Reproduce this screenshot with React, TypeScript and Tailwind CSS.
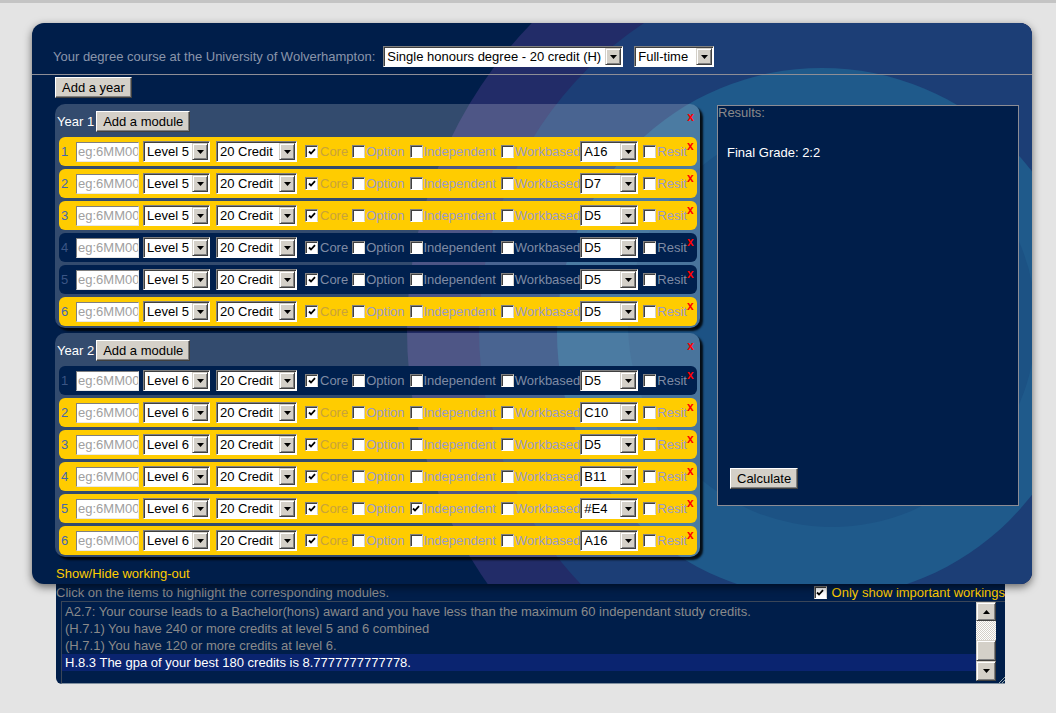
import { ReactNode } from 'react'

const Btn = ({ children, className = '' }: { children: ReactNode; className?: string }) => (
  <button
    className={`h-[21px] px-[6px] bg-[#d4d0c8] text-black text-[13px] leading-none border border-t-white border-l-white border-b-[#404040] border-r-[#404040] shadow-[inset_-1px_-1px_0_#808080] ${className}`}
  >
    {children}
  </button>
)

const Arrow = () => (
  <span className="w-[16px] h-[17px] bg-[#d4d0c8] border border-t-[#d4d0c8] border-l-[#d4d0c8] border-b-[#404040] border-r-[#404040] shadow-[inset_1px_1px_0_#fff,inset_-1px_-1px_0_#808080] flex items-center justify-center">
    <svg width="7" height="4" viewBox="0 0 7 4">
      <polygon points="0,0 7,0 3.5,4" fill="#000" />
    </svg>
  </span>
)

const Sel = ({ value, w }: { value: string; w: string }) => (
  <div
    className={`flex items-center h-[21px] bg-white border border-t-[#808080] border-l-[#808080] border-b-white border-r-white shadow-[inset_1px_1px_0_#404040] pr-[1px] ${w}`}
  >
    <span className="flex-1 pl-[3px] text-[13px] leading-[17px] text-black overflow-hidden whitespace-nowrap">{value}</span>
    <Arrow />
  </div>
)

const Cb = ({ checked = false, className = '' }: { checked?: boolean; className?: string }) => (
  <span
    className={`shrink-0 w-[13px] h-[13px] bg-white border border-t-[#808080] border-l-[#808080] border-b-white border-r-[#d4d0c8] shadow-[inset_1px_1px_0_#404040] flex items-center justify-center ${className}`}
  >
    {checked && (
      <svg width="8" height="8" viewBox="0 0 8 8">
        <path d="M1 3.5 L3 5.5 L7 1.2" stroke="#000" strokeWidth="1.8" fill="none" />
      </svg>
    )}
  </span>
)

type RowData = { grade: string; yellow: boolean; indep?: boolean }

const Row = ({ n, level, r }: { n: number; level: string; r: RowData }) => {
  const label = r.yellow ? 'text-[#9a9acb]' : 'text-[#7f8ba4]'
  const core = r.yellow ? 'text-[#c9a33a]' : 'text-[#7f8ba4]'
  return (
    <div
      className={`h-[29px] rounded-[6px] flex items-center text-[13px] ${r.yellow ? 'bg-[#ffcc00]' : 'bg-[#00204e]'}`}
    >
      <span className={`ml-[2px] w-[15px] ${r.yellow ? 'text-[#4466b0]' : 'text-[#3b5585]'}`}>{n}</span>
      <div className="w-[63px] h-[20px] bg-white border border-t-[#808080] border-l-[#808080] border-b-[#e8e8e8] border-r-[#e8e8e8] text-[#a0a0a0] pl-[1px] leading-[18px] overflow-hidden whitespace-nowrap">
        eg:6MM00
      </div>
      <Sel value={level} w="w-[67px] ml-[4px]" />
      <Sel value="20 Credit" w="w-[81px] ml-[6px]" />
      <Cb checked className="ml-[8px]" />
      <span className={`ml-[2px] ${core}`}>Core</span>
      <Cb className="ml-[4px]" />
      <span className={`ml-[1px] ${label}`}>Option</span>
      <Cb checked={r.indep} className="ml-[5px]" />
      <span className={`ml-[1px] ${label}`}>Independent</span>
      <Cb className="ml-[5px]" />
      <span className={`ml-[1px] ${label}`}>Workbased</span>
      <Sel value={r.grade} w="w-[58px]" />
      <Cb className="ml-[5px]" />
      <span className={`ml-[1px] ${label}`}>Resit</span>
      <span className="self-start mt-[3px] text-[12px] leading-[12px] font-bold text-[#ff0000]">x</span>
    </div>
  )
}

const Year = ({ year, level, rows }: { year: number; level: string; rows: RowData[] }) => (
  <div className="relative bg-white/20 rounded-[10px] shadow-[3px_3px_2px_rgba(0,0,0,0.85)] pl-[4px] pr-[3px] pt-[7px] pb-[2px]">
    <div className="flex items-center h-[21px] -ml-[2px]">
      <span className="text-white text-[13px] mr-[2px]">Year {year}</span>
      <Btn>Add a module</Btn>
    </div>
    <span className="absolute top-[7px] right-[6px] text-[12px] leading-[12px] font-bold text-[#ff0000]">x</span>
    <div className="mt-[5px] flex flex-col gap-[3px]">
      {rows.map((r, i) => (
        <Row key={i} n={i + 1} level={level} r={r} />
      ))}
    </div>
  </div>
)

const year1: RowData[] = [
  { grade: 'A16', yellow: true },
  { grade: 'D7', yellow: true },
  { grade: 'D5', yellow: true },
  { grade: 'D5', yellow: false },
  { grade: 'D5', yellow: false },
  { grade: 'D5', yellow: true },
]

const year2: RowData[] = [
  { grade: 'D5', yellow: false },
  { grade: 'C10', yellow: true },
  { grade: 'D5', yellow: true },
  { grade: 'B11', yellow: true },
  { grade: '#E4', yellow: true, indep: true },
  { grade: 'A16', yellow: true },
]

const workings = [
  'A2.7: Your course leads to a Bachelor(hons) award and you have less than the maximum 60 independant study credits.',
  '(H.7.1) You have 240 or more credits at level 5 and 6 combined',
  '(H.7.1) You have 120 or more credits at level 6.',
]

export default function App() {
  return (
    <div className="min-h-[713px] bg-[#e4e4e4] border-t-[3px] border-[#c4c4c4] pt-[20px] pl-[32px] font-['Liberation_Sans',Arial,sans-serif]">
      <div className="relative w-[1000px] h-[561px] rounded-[12px] bg-[#001e4a] overflow-hidden shadow-[0_3px_8px_rgba(0,0,0,0.55)]">
        <svg className="absolute inset-0" width="1000" height="561">
          <circle cx="815" cy="307" r="440" fill="#222c68" />
          <circle cx="815" cy="307" r="368" fill="#1c3e76" />
          <circle cx="790" cy="310" r="265" fill="#1f5a8b" />
          <circle cx="800" cy="300" r="204" fill="#1c5284" />
        </svg>
        <div className="relative">
          <div className="flex items-center pl-[21px] pt-[23px] pb-[7px] h-[52px] border-b border-[#8e8e96]">
            <span className="text-[#8a95aa] text-[13px] mr-[8px]">Your degree course at the University of Wolverhampton:</span>
            <Sel value="Single honours degree - 20 credit (H)" w="w-[240px]" />
            <Sel value="Full-time" w="w-[80px] ml-[11px]" />
          </div>
          <div className="flex pl-[23px]">
            <div className="w-[645px]">
              <Btn className="mt-[2px]">Add a year</Btn>
              <div className="mt-[5px]">
                <Year year={1} level="Level 5" rows={year1} />
              </div>
              <div className="mt-[5px]">
                <Year year={2} level="Level 6" rows={year2} />
              </div>
              <div className="mt-[9px] ml-[1px] text-[13px] leading-[15px] text-[#ffcc00]">Show/Hide working-out</div>
            </div>
            <div className="ml-[17px] mt-[30px] w-[302px] h-[401px] border border-[#8c8c94] bg-[#001e4a] relative">
              <div className="text-[13px] leading-[14px] text-[#8a8a8a]">Results:</div>
              <div className="mt-[23px] ml-[9px] text-[13px] text-white">Final Grade: 2:2</div>
              <Btn className="absolute left-[12px] top-[362px]">Calculate</Btn>
            </div>
          </div>
        </div>
      </div>
      <div className="ml-[24px] w-[949px] bg-[#001e4a] rounded-bl-[6px] text-[13px]">
        <div className="flex items-center justify-between h-[17px]">
          <span className="text-[#8a8a8a]">Click on the items to highlight the corresponding modules.</span>
          <span className="flex items-center">
            <Cb checked className="mr-[5px]" />
            <span className="text-[#ffcc00]">Only show important workings</span>
          </span>
        </div>
        <div className="ml-[5px] h-[83px] border-t border-l border-b border-t-[#3a4658] border-l-[#3a4658] border-b-[#8090a0] flex relative">
          <div className="flex-1 pt-[1px]">
            {workings.map((w, i) => (
              <div key={i} className="h-[17px] leading-[17px] pl-[3px] text-[#8a8a8a] whitespace-nowrap">
                {w}
              </div>
            ))}
            <div className="h-[17px] leading-[17px] pl-[3px] text-white bg-[#0a2470]">
              H.8.3 The gpa of your best 180 credits is 8.7777777777778.
            </div>
          </div>
          <div className="w-[20px] flex flex-col">
            <span className="h-[19px] bg-[#d4d0c8] border border-t-[#d4d0c8] border-l-[#d4d0c8] border-b-[#404040] border-r-[#404040] shadow-[inset_1px_1px_0_#fff,inset_-1px_-1px_0_#808080] flex items-center justify-center">
              <svg width="7" height="4" viewBox="0 0 7 4">
                <polygon points="3.5,0 7,4 0,4" fill="#000" />
              </svg>
            </span>
            <span className="h-[19px] bg-[repeating-conic-gradient(#d4d0c8_0%_25%,#ffffff_0%_50%)] bg-[length:2px_2px]" />
            <span className="h-[21px] bg-[#d4d0c8] border border-t-[#d4d0c8] border-l-[#d4d0c8] border-b-[#404040] border-r-[#404040] shadow-[inset_1px_1px_0_#fff,inset_-1px_-1px_0_#808080]" />
            <span className="h-[20px] bg-[#d4d0c8] border border-t-[#d4d0c8] border-l-[#d4d0c8] border-b-[#404040] border-r-[#404040] shadow-[inset_1px_1px_0_#fff,inset_-1px_-1px_0_#808080] flex items-center justify-center">
              <svg width="7" height="4" viewBox="0 0 7 4">
                <polygon points="0,0 7,0 3.5,4" fill="#000" />
              </svg>
            </span>
          </div>
          <div className="w-[9px] relative">
            <svg className="absolute right-0 bottom-0" width="6" height="6" viewBox="0 0 6 6">
              <path d="M6 0 L0 6 M6 3 L3 6" stroke="#9aa" strokeWidth="1" />
            </svg>
          </div>
        </div>
      </div>
    </div>
  )
}
